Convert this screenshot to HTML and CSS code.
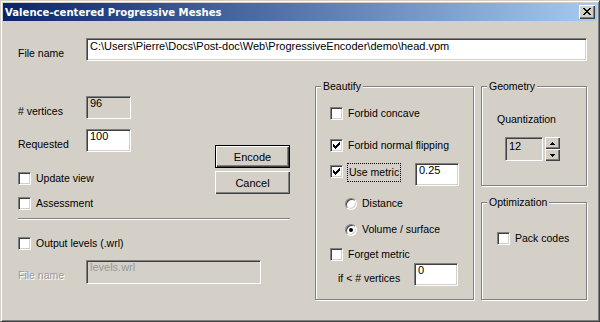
FILE: index.html
```html
<!DOCTYPE html>
<html lang="en">
<head>
    <meta charset="UTF-8">
    <title>Valence-centered Progressive Meshes</title>
    <link rel="stylesheet" href="styles.css">
</head>
<body>
<div class="window">
    <div class="titlebar">
        <span class="title">Valence-centered Progressive Meshes</span>
        <button class="close-btn" aria-label="Close">
            <svg width="8" height="7" viewBox="0 0 8 7"><path d="M0 0h2v1h-2z M6 0h2v1h-2z M1 1h2v1h-2z M5 1h2v1h-2z M2 2h4v1h-4z M3 3h2v1h-2z M2 4h4v1h-4z M1 5h2v1h-2z M5 5h2v1h-2z M0 6h2v1h-2z M6 6h2v1h-2z" fill="#000"/></svg>
        </button>
    </div>

    <div class="dialog">
        <div class="file-row">
            <span class="field-label">File name</span>
            <input class="edit edit-path" type="text" value="C:\Users\Pierre\Docs\Post-doc\Web\ProgressiveEncoder\demo\head.vpm">
        </div>

        <div class="main">
            <!-- left column: counts, options and buttons -->
            <div class="left-col">
                <div class="top-part">
                    <div class="fields">
                        <div class="field-row">
                            <span class="field-label"># vertices</span>
                            <input class="edit edit-short readonly" type="text" value="96" readonly>
                        </div>
                        <div class="field-row">
                            <span class="field-label">Requested</span>
                            <input class="edit edit-short" type="text" value="100">
                        </div>
                        <div class="check-row update-row">
                            <span class="checkbox"></span>
                            <span>Update view</span>
                        </div>
                        <div class="check-row assess-row">
                            <span class="checkbox"></span>
                            <span>Assessment</span>
                        </div>
                    </div>
                    <div class="buttons">
                        <button class="btn btn-default">Encode</button>
                        <button class="btn">Cancel</button>
                    </div>
                </div>

                <div class="separator"></div>

                <div class="check-row output-row">
                    <span class="checkbox"></span>
                    <span>Output levels (.wrl)</span>
                </div>
                <div class="field-row levels-row">
                    <span class="field-label disabled">File name</span>
                    <input class="edit edit-levels readonly disabled" type="text" value="levels.wrl" disabled>
                </div>
            </div>

            <fieldset class="group beautify">
                <legend>Beautify</legend>
                <div class="check-row concave-row">
                    <span class="checkbox"></span>
                    <span>Forbid concave</span>
                </div>
                <div class="check-row flip-row">
                    <span class="checkbox"><svg width="7" height="7" viewBox="0 0 7 7"><path d="M6 0h1v1h-1z M5 1h2v1h-2z M0 2h1v1h-1z M4 2h3v1h-3z M0 3h2v1h-2z M3 3h3v1h-3z M0 4h5v1h-5z M1 5h3v1h-3z M2 6h1v1h-1z" fill="#000"/></svg></span>
                    <span>Forbid normal flipping</span>
                </div>
                <div class="metric-row">
                    <span class="checkbox"><svg width="7" height="7" viewBox="0 0 7 7"><path d="M6 0h1v1h-1z M5 1h2v1h-2z M0 2h1v1h-1z M4 2h3v1h-3z M0 3h2v1h-2z M3 3h3v1h-3z M0 4h5v1h-5z M1 5h3v1h-3z M2 6h1v1h-1z" fill="#000"/></svg></span>
                    <span class="focus-label">Use metric</span>
                    <input class="edit edit-metric" type="text" value="0.25">
                </div>
                <div class="radio-row distance-row">
                    <span class="radio"></span>
                    <span>Distance</span>
                </div>
                <div class="radio-row volume-row">
                    <span class="radio on"></span>
                    <span>Volume / surface</span>
                </div>
                <div class="check-row forget-row">
                    <span class="checkbox"></span>
                    <span>Forget metric</span>
                </div>
                <div class="field-row min-row">
                    <span class="field-label min-label">if &lt; # vertices</span>
                    <input class="edit edit-metric" type="text" value="0">
                </div>
            </fieldset>

            <div class="right-col">
                <fieldset class="group geometry">
                    <legend>Geometry</legend>
                    <div class="quant-label">Quantization</div>
                    <div class="spin-row">
                        <input class="edit edit-quant readonly" type="text" value="12" readonly>
                        <div class="spinner">
                            <button class="spin-btn"><svg width="5" height="3" viewBox="0 0 5 3"><path d="M2 0h1v1h1v1h1v1h-5v-1h1v-1h1z" fill="#000"/></svg></button>
                            <button class="spin-btn"><svg width="5" height="3" viewBox="0 0 5 3"><path d="M0 0h5v1h-1v1h-1v1h-1v-1h-1v-1h-1z" fill="#000"/></svg></button>
                        </div>
                    </div>
                </fieldset>
                <fieldset class="group optimization">
                    <legend>Optimization</legend>
                    <div class="check-row pack-row">
                        <span class="checkbox"></span>
                        <span>Pack codes</span>
                    </div>
                </fieldset>
            </div>
        </div>
    </div>
</div>
</body>
</html>
```

FILE: styles.css
```css
html, body {
    margin: 0;
    padding: 0;
}

body {
    width: 600px;
    height: 322px;
    overflow: hidden;
    background-color: #d4d0c8;
    font-family: "Liberation Sans", Arial, sans-serif;
    font-size: 10.5px;
    color: #000000;
}

.window {
    box-sizing: border-box;
    width: 600px;
    height: 322px;
    padding: 2px;
    border: 1px solid;
    border-color: #d4d0c8 #404040 #404040 #d4d0c8;
    box-shadow: inset 1px 1px #ffffff, inset -1px -1px #808080;
    background-color: #d4d0c8;
}

.titlebar {
    display: flex;
    align-items: center;
    justify-content: space-between;
    height: 18px;
    padding: 0 2px 0 2px;
    background: linear-gradient(to right, #0a246a, #a6caf0);
}

.title {
    color: #ffffff;
    font-family: "DejaVu Sans", Verdana, sans-serif;
    font-weight: bold;
    font-size: 10.1px;
    white-space: nowrap;
}

.close-btn {
    display: flex;
    align-items: center;
    justify-content: center;
    width: 16px;
    height: 14px;
    padding: 0 1px 1px 0;
    border: none;
    background-color: #d4d0c8;
    box-shadow: inset 1px 1px #ffffff, inset -1px -1px #404040, inset -2px -2px #808080;
}

.dialog {
    padding: 17px 0 0 15px;
}

.file-row {
    display: flex;
    align-items: flex-start;
}

.field-label {
    width: 68px;
    padding-top: 9px;
    line-height: 13px;
    white-space: nowrap;
}

.field-label.disabled {
    color: #999999;
    text-shadow: 1px 1px #ffffff;
}

/* sunken edit box, text sits at the top like a win32 edit */
.edit {
    box-sizing: border-box;
    height: 23px;
    margin: 0;
    padding: 0 3px 9px;
    border: 1px solid;
    border-color: #808080 #ffffff #ffffff #808080;
    box-shadow: inset 1px 1px #404040, inset -1px -1px #d4d0c8;
    background-color: #ffffff;
    font-family: inherit;
    font-size: 11px;
    line-height: 12px;
    color: #000000;
    outline: none;
}

.edit.readonly {
    background-color: #d4d0c8;
}

.edit.disabled {
    color: #999999;
    opacity: 1;
}

.edit-path {
    width: 501px;
    padding-top: 1px;
    padding-bottom: 8px;
}

.edit-short {
    width: 45px;
}

.edit-levels {
    width: 175px;
    height: 24px;
    padding-bottom: 10px;
}

.edit-metric {
    width: 44px;
}

.edit-quant {
    width: 38px;
    height: 24px;
    padding-top: 2px;
    padding-bottom: 8px;
}

.main {
    display: flex;
    margin-top: 19px;
}

.left-col {
    width: 272px;
    margin-right: 25px;
    padding-top: 16px;
}

.top-part {
    display: flex;
}

.fields {
    width: 197px;
}

.field-row {
    display: flex;
    align-items: flex-start;
    height: 23px;
}

.field-row + .field-row {
    margin-top: 10px;
}

.check-row,
.radio-row {
    display: flex;
    align-items: center;
    height: 13px;
    line-height: 13px;
    white-space: nowrap;
}

.update-row {
    margin-top: 20px;
}

.assess-row {
    margin-top: 12px;
}

.buttons {
    display: flex;
    flex-direction: column;
    gap: 3px;
    padding-top: 49px;
}

.btn {
    width: 75px;
    height: 23px;
    padding: 0;
    border: none;
    background-color: #d4d0c8;
    box-shadow: inset 1px 1px #ffffff, inset -1px -1px #404040, inset -2px -2px #808080;
    font-family: inherit;
    font-size: 11px;
    color: #000000;
}

.btn-default {
    border: 1px solid #000000;
}

.separator {
    margin-top: 8px;
    border-top: 1px solid #808080;
    border-bottom: 1px solid #ffffff;
}

.output-row {
    margin-top: 17px;
}

.levels-row {
    margin-top: 10px;
    height: 24px;
}

.checkbox {
    box-sizing: border-box;
    display: flex;
    align-items: center;
    justify-content: center;
    flex: none;
    width: 13px;
    height: 13px;
    margin-right: 5px;
    border: 1px solid;
    border-color: #808080 #ffffff #ffffff #808080;
    box-shadow: inset 1px 1px #404040, inset -1px -1px #d4d0c8;
    background-color: #ffffff;
}

.radio {
    box-sizing: border-box;
    display: flex;
    align-items: center;
    justify-content: center;
    flex: none;
    width: 12px;
    height: 12px;
    margin-right: 5px;
    border: 1px solid;
    border-color: #808080 #ffffff #ffffff #808080;
    border-radius: 50%;
    box-shadow: inset 1px 1px #404040, inset -1px -1px #d4d0c8;
    background-color: #ffffff;
}

.radio.on::after {
    content: "";
    width: 4px;
    height: 4px;
    border-radius: 50%;
    background-color: #000000;
}

/* etched group box */
.group {
    box-sizing: border-box;
    min-width: 0;
    margin: 0;
    padding: 0;
    border: 1px solid #808080;
    box-shadow: 1px 1px 0 #ffffff, inset 1px 1px 0 #ffffff;
}

.group legend {
    margin-left: 5px;
    padding: 0 2px;
    line-height: 12px;
    background-color: #d4d0c8;
}

.beautify {
    width: 159px;
    height: 220px;
}

.concave-row {
    margin: 15px 0 0 14px;
}

.flip-row {
    margin: 19px 0 0 14px;
}

.metric-row {
    display: flex;
    align-items: flex-start;
    height: 23px;
    margin: 11px 0 0 14px;
}

.metric-row .checkbox {
    margin: 2px 4px 0 0;
}

.focus-label {
    box-sizing: border-box;
    width: 54px;
    height: 19px;
    padding-left: 1px;
    border: 1px dotted #000000;
    line-height: 17px;
    white-space: nowrap;
}

.metric-row .edit {
    margin-left: 14px;
}

.distance-row {
    margin: 11px 0 0 29px;
}

.volume-row {
    margin: 13px 0 0 29px;
}

.forget-row {
    margin: 12px 0 0 14px;
}

.field-row.min-row {
    margin: 2px 0 0 22px;
}

.min-label {
    width: 76px;
}

.right-col {
    display: flex;
    flex-direction: column;
    gap: 10px;
    width: 106px;
    margin-left: 7px;
}

.geometry {
    height: 106px;
}

.optimization {
    height: 104px;
}

.quant-label {
    margin: 21px 0 0 15px;
    line-height: 13px;
}

.spin-row {
    display: flex;
    margin: 11px 0 0 23px;
}

.spinner {
    display: flex;
    flex-direction: column;
    margin-left: 2px;
}

.spin-btn {
    display: flex;
    align-items: center;
    justify-content: center;
    width: 15px;
    height: 12px;
    padding: 0;
    border: none;
    background-color: #d4d0c8;
    box-shadow: inset 1px 1px #ffffff, inset -1px -1px #404040, inset -2px -2px #808080;
}

.pack-row {
    margin: 24px 0 0 15px;
}
```
